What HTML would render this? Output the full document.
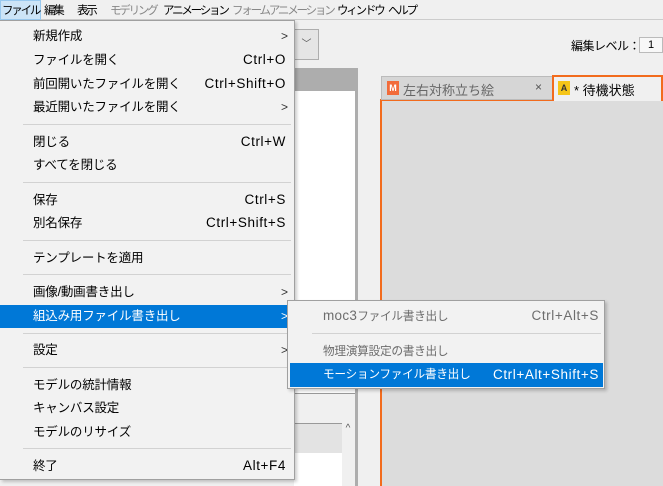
<!DOCTYPE html>
<html><head><meta charset="utf-8"><style>
*{margin:0;padding:0;box-sizing:border-box}
body{width:663px;height:486px;overflow:hidden;background:#f0f0f0;font-family:"Liberation Sans","Noto Sans CJK JP",sans-serif;position:relative;font-size:13px;color:#000}
.a{position:absolute}
.mb span{position:absolute;top:2px;font-size:11.5px;letter-spacing:-2.2px;white-space:nowrap}
.it{position:absolute;left:33px;font-size:12.5px;letter-spacing:-0.2px;white-space:nowrap;line-height:18px}
.sc{position:absolute;right:8px;font-size:13.5px;letter-spacing:0.6px;line-height:18px}
.ar{position:absolute;right:6px;font-size:12px;line-height:18px;color:#333}
.sep{position:absolute;left:23px;right:3px;height:1px;background:#d2d2d2}
.sub .it{font-size:11.7px;letter-spacing:-0.3px}
</style></head><body>
<div class="a" style="left:0;top:19px;width:663px;height:1px;background:#ccc"></div>
<div class="a" style="left:294px;top:29px;width:25px;height:31px;border:1px solid #adadad;background:#e5e5e5;font-size:10px;color:#555;text-align:center;line-height:29px">﹀</div>
<div class="a" style="left:571px;top:37px;font-size:12px;letter-spacing:-0.5px">編集レベル：</div>
<div class="a" style="left:639px;top:37px;width:24px;height:16px;border:1px solid #bbb;background:#f8f8f8;font-size:11px;text-align:center;line-height:14px">1</div>
<div class="a" style="left:294px;top:68px;width:64px;height:418px;background:#adadad"></div>
<div class="a" style="left:294px;top:91px;width:61px;height:302px;background:#fff"></div>
<div class="a" style="left:294px;top:393px;width:61px;height:93px;background:#f0f0f0;border-top:1px solid #999"></div>
<div class="a" style="left:294px;top:423px;width:48px;height:30px;background:#e3e3e3;border-top:1px solid #999"></div>
<div class="a" style="left:294px;top:453px;width:48px;height:33px;background:#fff"></div>
<div class="a" style="left:342px;top:423px;width:12px;height:63px;background:#f0f0f0;font-size:10px;color:#555;text-align:center">^</div>
<div class="a" style="left:358px;top:72px;width:305px;height:414px;background:#f0f0f0"></div>
<div class="a" style="left:380px;top:99px;width:283px;height:387px;background:#dcdcdc;border-left:2px solid #f26b1d;border-top:2px solid #f26b1d"></div>
<div class="a" style="left:381px;top:76px;width:172px;height:24px;background:#d6d6d6;border:1px solid #bbb"></div>
<div class="a" style="left:387px;top:81px;width:12px;height:14px;background:#f26b3a;color:#fff;font-size:9px;font-weight:bold;text-align:center;line-height:14px">M</div>
<div class="a" style="left:403px;top:80px;font-size:13px;color:#666">左右対称立ち絵</div>
<div class="a" style="left:535px;top:80px;font-size:12px;color:#555">×</div>
<div class="a" style="left:552px;top:75px;width:111px;height:26px;background:#f0f0f0;border:2px solid #f26b1d;border-bottom:none"></div>
<div class="a" style="left:558px;top:81px;width:12px;height:14px;background:#f5c518;color:#333;font-size:9px;font-weight:bold;text-align:center;line-height:14px">A</div>
<div class="a" style="left:574px;top:80px;font-size:13px">*&nbsp;待機状態</div>
<div class="mb">
<div class="a" style="left:0;top:0;width:41px;height:20px;background:#cce4f7;border:1px solid #99c9ef"></div>
<span style="left:2px">ファイル</span><span style="left:44px">編集</span><span style="left:77px">表示</span><span style="left:110px;color:#888">モデリング</span><span style="left:163px">アニメーション</span><span style="left:232px;color:#888">フォームアニメーション</span><span style="left:337px">ウィンドウ</span><span style="left:388px">ヘルプ</span>
</div>
<div class="a" style="left:0;top:20px;width:295px;height:460px;background:#f2f2f2;border:1px solid #a0a0a0;border-left:none;box-shadow:2px 2px 3px rgba(0,0,0,.2)">
<div class="a" style="left:0;top:284px;width:294px;height:23px;background:#0078d7"></div>
<div class="it" style="top:6px">新規作成</div><div class="ar" style="top:6px">&gt;</div>
<div class="it" style="top:30px">ファイルを開く</div><div class="sc" style="top:30px">Ctrl+O</div>
<div class="it" style="top:54px">前回開いたファイルを開く</div><div class="sc" style="top:54px">Ctrl+Shift+O</div>
<div class="it" style="top:77px">最近開いたファイルを開く</div><div class="ar" style="top:77px">&gt;</div>
<div class="sep" style="top:103px"></div>
<div class="it" style="top:112px">閉じる</div><div class="sc" style="top:112px">Ctrl+W</div>
<div class="it" style="top:135px">すべてを閉じる</div>
<div class="sep" style="top:161px"></div>
<div class="it" style="top:170px">保存</div><div class="sc" style="top:170px">Ctrl+S</div>
<div class="it" style="top:193px">別名保存</div><div class="sc" style="top:193px">Ctrl+Shift+S</div>
<div class="sep" style="top:219px"></div>
<div class="it" style="top:228px">テンプレートを適用</div>
<div class="sep" style="top:253px"></div>
<div class="it" style="top:262px">画像/動画書き出し</div><div class="ar" style="top:262px">&gt;</div>
<div class="it" style="top:286px;color:#fff">組込み用ファイル書き出し</div><div class="ar" style="top:286px;color:#fff">&gt;</div>
<div class="sep" style="top:312px"></div>
<div class="it" style="top:320px">設定</div><div class="ar" style="top:320px">&gt;</div>
<div class="sep" style="top:346px"></div>
<div class="it" style="top:355px">モデルの統計情報</div>
<div class="it" style="top:378px">キャンバス設定</div>
<div class="it" style="top:402px">モデルのリサイズ</div>
<div class="sep" style="top:427px"></div>
<div class="it" style="top:436px">終了</div><div class="sc" style="top:436px">Alt+F4</div>
</div>
<div class="a sub" style="left:287px;top:300px;width:318px;height:89px;background:#f2f2f2;border:1px solid #a0a0a0;box-shadow:2px 2px 3px rgba(0,0,0,.2)">
<div class="a" style="left:2px;top:62px;width:313px;height:24px;background:#0078d7"></div>
<div class="it" style="left:35px;top:6px;color:#6d6d6d"><span style="font-size:13.5px;letter-spacing:0.3px">moc3</span>ファイル書き出し</div><div class="sc" style="right:5px;top:6px;color:#6d6d6d">Ctrl+Alt+S</div>
<div class="sep" style="left:24px;top:32px"></div>
<div class="it" style="left:35px;top:42px;color:#6d6d6d">物理演算設定の書き出し</div>
<div class="it" style="left:35px;top:65px;color:#fff">モーションファイル書き出し</div><div class="sc" style="right:5px;top:65px;color:#fff">Ctrl+Alt+Shift+S</div>
</div>
</body></html>
